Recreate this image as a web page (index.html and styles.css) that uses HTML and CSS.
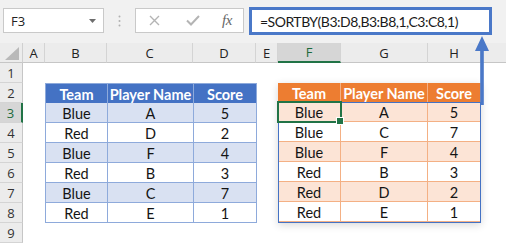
FILE: index.html
```html
<!DOCTYPE html>
<html>
<head>
<meta charset="utf-8">
<link rel="stylesheet" href="styles.css">
</head>
<body>
<div class="app">
  <div class="fbar">
    <div class="namebox">
      <span class="nb-text">F3</span>
      <svg class="caret" width="7" height="4" viewBox="0 0 7 4"><polygon points="0,0 7,0 3.5,4" fill="#6d6d6d"/></svg>
    </div>
    <div class="grip">
      <svg width="3" height="12" viewBox="0 0 3 12"><circle cx="1.5" cy="1.5" r="1" fill="#b0b0b0"/><circle cx="1.5" cy="6" r="1" fill="#b0b0b0"/><circle cx="1.5" cy="10.5" r="1" fill="#b0b0b0"/></svg>
    </div>
    <div class="fbtns">
      <svg class="ico-x" width="11" height="11" viewBox="0 0 11 11"><path d="M1 1 L10 10 M10 1 L1 10" stroke="#b4b4b4" stroke-width="1.4" fill="none"/></svg>
      <svg class="ico-ok" width="14" height="11" viewBox="0 0 14 11"><path d="M1 5.5 L5 9.5 L13 1" stroke="#b4b4b4" stroke-width="2" fill="none"/></svg>
      <span class="fx">fx</span>
    </div>
    <div class="finput">
      <span class="ftext">=SORTBY(B3:D8,B3:B8,1,C3:C8,1)</span>
    </div>
  </div>

  <div class="sheet">
    <div class="corner"><svg width="14" height="13" viewBox="0 0 14 13"><polygon points="14,0 14,13 0,13" fill="#b9b9b9"/></svg></div>
    <div class="ch">A</div>
    <div class="ch">B</div>
    <div class="ch">C</div>
    <div class="ch">D</div>
    <div class="ch">E</div>
    <div class="ch sel">F</div>
    <div class="ch">G</div>
    <div class="ch">H</div>
    <div class="ch last"></div>

    <div class="rh r1">1</div>
    <div class="rh r2">2</div>
    <div class="rh r3 sel">3</div>
    <div class="rh r4">4</div>
    <div class="rh r5">5</div>
    <div class="rh r6">6</div>
    <div class="rh r7">7</div>
    <div class="rh r8">8</div>
    <div class="rh r9">9</div>

    <div class="tbl blue">
      <div class="th">Team</div><div class="th">Player Name</div><div class="th">Score</div>
      <div class="td band">Blue</div><div class="td band">A</div><div class="td band">5</div>
      <div class="td">Red</div><div class="td">D</div><div class="td">2</div>
      <div class="td band">Blue</div><div class="td band">F</div><div class="td band">4</div>
      <div class="td">Red</div><div class="td">B</div><div class="td">3</div>
      <div class="td band">Blue</div><div class="td band">C</div><div class="td band">7</div>
      <div class="td">Red</div><div class="td">E</div><div class="td">1</div>
    </div>

    <div class="tbl orange">
      <div class="th">Team</div><div class="th">Player Name</div><div class="th">Score</div>
      <div class="spill">
        <div class="td band">Blue</div><div class="td band">A</div><div class="td band">5</div>
        <div class="td">Blue</div><div class="td">C</div><div class="td">7</div>
        <div class="td band">Blue</div><div class="td band">F</div><div class="td band">4</div>
        <div class="td">Red</div><div class="td">B</div><div class="td">3</div>
        <div class="td band">Red</div><div class="td band">D</div><div class="td band">2</div>
        <div class="td">Red</div><div class="td">E</div><div class="td">1</div>
        <div class="cursor"></div>
      </div>
    </div>
  </div>

  <svg class="arrow" width="18" height="70" viewBox="0 0 18 70">
    <rect x="6.2" y="12" width="3.6" height="57" fill="#4a78c8"/>
    <polygon points="8,0 1,15 15,15" fill="#4a78c8"/>
  </svg>
</div>
</body>
</html>
```

FILE: styles.css
```css
* { box-sizing: border-box; }
html, body { margin: 0; padding: 0; }
body {
  width: 506px;
  height: 244px;
  overflow: hidden;
  background: #ffffff;
  font-family: "Open Sans", "Liberation Sans", sans-serif;
}
.app {
  position: relative;
  width: 506px;
  height: 244px;
}

/* formula bar */
.fbar {
  height: 43px;
  background: #f1f1f1;
  display: flex;
  align-items: flex-start;
  padding: 8px 0 0 3px;
}
.namebox {
  width: 101px;
  height: 25px;
  background: #fff;
  border: 1px solid #c9c9c9;
  display: flex;
  align-items: center;
  justify-content: space-between;
  padding: 0 7px 0 7px;
}
.nb-text {
  font-size: 13px;
  color: #222;
}
.grip {
  width: 31px;
  height: 25px;
  display: flex;
  align-items: center;
  justify-content: center;
}
.fbtns {
  width: 109px;
  height: 25px;
  background: #fff;
  border: 1px solid #c9c9c9;
  display: flex;
  align-items: center;
  padding-left: 13px;
}
.ico-x { margin-right: 26px; }
.ico-ok { margin-right: 22px; }
.fx {
  font-family: "Liberation Serif", "DejaVu Serif", serif;
  font-style: italic;
  font-size: 15px;
  color: #666;
  letter-spacing: -0.5px;
}
.finput {
  margin-left: 5px;
  margin-top: -1px;
  width: 243px;
  height: 28px;
  background: #fff;
  border: 3px solid #4a78c8;
  display: flex;
  align-items: center;
  padding-left: 8px;
}
.ftext {
  font-family: Lato, "Liberation Sans", sans-serif;
  font-size: 14px;
  color: #1a1a1a;
  letter-spacing: -0.5px;
}

/* sheet grid */
.sheet {
  display: grid;
  grid-template-columns: 23px 22px 62px 86px 63px 22px 63px 87px 53px 1fr;
  grid-template-rows: repeat(10, 20px);
}
.corner {
  grid-row: 1;
  grid-column: 1;
  background: #ececec;
  border-right: 1px solid #d0d0d0;
  border-bottom: 1px solid #c6c6c6;
  display: flex;
  align-items: flex-end;
  justify-content: flex-end;
  padding: 0 3px 2px 0;
}
.ch {
  grid-row: 1;
  background: #ececec;
  border-right: 1px solid #d4d4d4;
  border-bottom: 1px solid #c6c6c6;
  font-size: 13px;
  color: #222;
  display: flex;
  align-items: center;
  justify-content: center;
}
.ch.sel {
  background: #d6d6d6;
  color: #1d6a3b;
  border-bottom: 2px solid #217346;
}
.ch.last { border-right: none; }
.rh {
  grid-column: 1;
  background: #ececec;
  border-right: 1px solid #c6c6c6;
  border-bottom: 1px solid #d4d4d4;
  font-size: 13px;
  color: #333;
  display: flex;
  align-items: center;
  justify-content: center;
}
.rh.sel {
  background: #d6d6d6;
  color: #1d6a3b;
  border-right: 2px solid #217346;
}
.r1 { grid-row: 2; }
.r2 { grid-row: 3; }
.r3 { grid-row: 4; }
.r4 { grid-row: 5; }
.r5 { grid-row: 6; }
.r6 { grid-row: 7; }
.r7 { grid-row: 8; }
.r8 { grid-row: 9; }
.r9 { grid-row: 10; }

/* tables */
.tbl {
  grid-row: 3 / 10;
  display: grid;
  grid-template-rows: repeat(7, 20px);
  font-family: Lato, "Liberation Sans", sans-serif;
  font-size: 14.5px;
  color: #141414;
}
.tbl.blue {
  grid-column: 3 / 6;
  grid-template-columns: 62px 86px 63px;
  border-left: 1px solid #8eaadb;
}
.tbl.orange {
  grid-column: 7 / 10;
  grid-template-columns: 63px 87px 53px;
  box-shadow: 0 2px 8px rgba(0, 0, 0, 0.16);
}
.th, .td {
  display: flex;
  align-items: center;
  justify-content: center;
  padding-top: 1px;
}
.th {
  color: #fff;
  font-weight: bold;
}
.blue .th {
  background: #4472c4;
  border-right: 1px solid #8eaadb;
  border-top: 1px solid #8eaadb;
}
.blue .td {
  border-right: 1px solid #8eaadb;
  border-bottom: 1px solid #8eaadb;
}
.blue .td.band { background: #d9e1f2; }
.orange .th {
  background: #ed7d31;
  border-right: 1px solid #f4b084;
}
.spill {
  grid-row: 2 / 8;
  grid-column: 1 / 4;
  display: grid;
  grid-template-columns: 63px 87px 53px;
  grid-template-rows: repeat(6, 20px);
  outline: 1px solid #4472c4;
  outline-offset: -1px;
  position: relative;
  margin-top: -1px;
}
.orange .td {
  border-right: 1px solid #f4b084;
  border-bottom: 1px solid #f4b084;
  background: #fff;
}
.orange .td.band { background: #fce4d6; }
.cursor {
  position: absolute;
  left: -1px;
  top: -1px;
  width: 65px;
  height: 22px;
  border: 2px solid #217346;
}
.cursor::after {
  content: "";
  position: absolute;
  right: -4px;
  bottom: -4px;
  width: 6px;
  height: 6px;
  background: #217346;
  border: 1px solid #fff;
}

.arrow {
  position: absolute;
  left: 474px;
  top: 36px;
}
```
